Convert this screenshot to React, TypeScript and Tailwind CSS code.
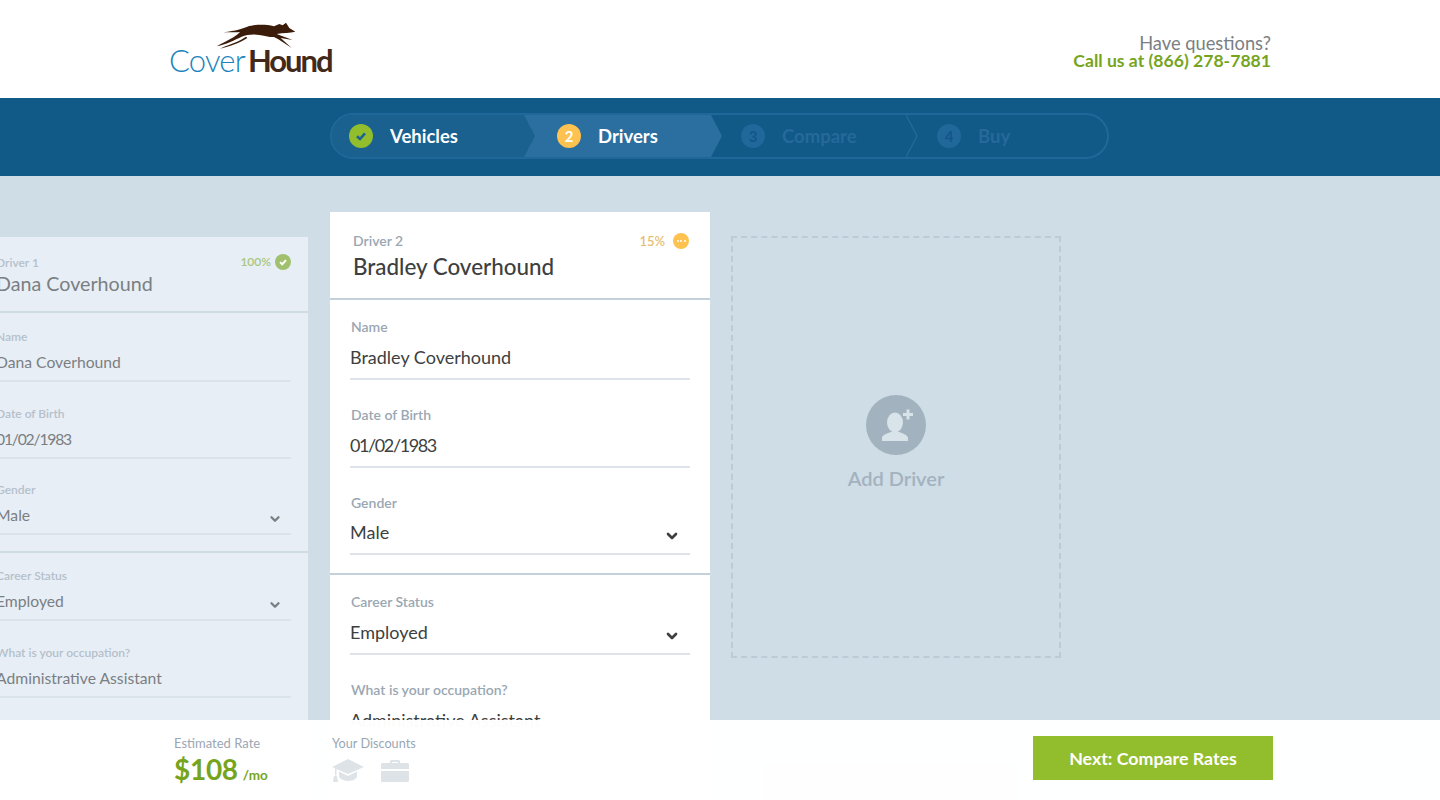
import { ChevronDown } from "lucide-react";

const font = "font-['Lato','Noto_Sans',sans-serif]";

const steps = [
  { n: "2", label: "Drivers", width: "w-[187px]", pl: "pl-[33px]" },
  { n: "3", label: "Compare", width: "w-[195px]", pl: "pl-[30px]" },
  { n: "4", label: "Buy", width: "w-[201px]", pl: "pl-[31px]" },
];

function Check({ className }: { className?: string }) {
  return (
    <svg viewBox="0 0 16 16" className={className} fill="none" stroke="currentColor" strokeWidth="2.6">
      <path d="M4 8.2 7 11l5-5.6" />
    </svg>
  );
}

function Logo() {
  return (
    <div className="relative h-[52px] w-[162px]">
      <svg viewBox="0 0 270 102" className="absolute left-[41px] top-[-4px] h-[34px] w-[90px]" fill="#3b1c0a">
        <path d="M256 41 238 30 228 14 218 22 208 18 192 25C165 18 130 20 112 26 95 32 80 38 40 43 60 42 75 44 90 42 75 58 50 68 20 85 50 78 70 68 95 56 115 48 140 48 165 54 175 57 185 57 192 57L205 64 245 90 212 60 248 66 200 48C220 44 240 45 256 41Z" />
        <path d="M30 92C50 80 75 78 108 56L112 60C85 78 60 84 30 92Z" />
      </svg>
      <div className="absolute bottom-[-2px] left-0 flex items-baseline text-[31px] leading-[32px]">
        <span className="font-light tracking-[-0.8px] text-[#1b84bd]">Cover</span>
        <span className="ml-[3px] font-bold tracking-[-2px] text-[#43291a]">Hound</span>
      </div>
    </div>
  );
}

function Stepper() {
  return (
    <div className="flex h-[78px] items-start bg-[#115a87] pl-[330px] pt-[15px]">
      <div className="flex h-[46px] w-[779px] overflow-hidden rounded-full border-2 border-[#20689a] text-[18.5px] font-bold">
        <div className="relative z-10 flex w-[192px] items-center bg-[#1b618f] pl-[17px] text-white">
          <span className="flex h-6 w-6 items-center justify-center rounded-full bg-[#92bd2d] text-[#1c6392]">
            <Check className="h-4 w-4" />
          </span>
          <span className="ml-[17px] pt-[2px]">Vehicles</span>
        </div>
        {steps.map((s) => (
          <div key={s.n} className={`relative flex items-center ${s.width} ${s.pl} ${s.n === "2" ? "text-white" : "text-[#26699a]"}`}>
            {s.n === "2" && <div className="absolute inset-0 bg-[#2a6f9f]" />}
            {s.n === "2" && (
              <svg viewBox="0 0 11 42" preserveAspectRatio="none" className="absolute left-0 top-0 h-full w-[11px]">
                <path d="M0 0 11 21 0 42Z" fill="#1b618f" />
              </svg>
            )}
            {s.n === "2" && (
              <svg viewBox="0 0 11 42" preserveAspectRatio="none" className="absolute -right-[11px] top-0 z-10 h-full w-[11px]">
                <path d="M0 0 11 21 0 42Z" fill="#2a6f9f" />
              </svg>
            )}
            {s.n === "3" && (
              <svg viewBox="0 0 12 42" preserveAspectRatio="none" className="absolute -right-[12px] top-0 z-10 h-full w-[12px]" fill="none" stroke="#20689a" strokeWidth="1.5">
                <path d="M0 0 11 21 0 42" />
              </svg>
            )}
            <span className={`relative flex h-6 w-6 items-center justify-center rounded-full text-[15px] ${s.n === "2" ? "bg-[#fdc24f] text-white" : "bg-[#20689a] text-[#14558a]"}`}>
              {s.n}
            </span>
            <span className="relative ml-[17px] pt-[2px]">{s.label}</span>
          </div>
        ))}
      </div>
    </div>
  );
}

function DimField({ label, value, select, date }: { label: string; value: string; select?: boolean; date?: boolean }) {
  return (
    <div className="h-[76.5px] pt-[16px]">
      <div className="text-[12px] leading-[16px] font-semibold text-[#b4c0cb]">{label}</div>
      <div className="mt-[4px] flex h-[33px] items-center justify-between border-b-2 border-[#dae2ea] pb-[3px] text-[15.7px] text-[#7a7f83]">
        <span className={date ? "tracking-[-1.2px]" : ""}>{value}</span>
        {select && <ChevronDown size={14} strokeWidth={4} className="mr-[9px] translate-y-[3px]" />}
      </div>
    </div>
  );
}

function Field({ label, value, select, short, date }: { label: string; value: string; select?: boolean; short?: boolean; date?: boolean }) {
  return (
    <div className="h-[88px] pt-[18px]">
      <div className="pl-px text-[14px] leading-[18px] font-semibold text-[#9aa7b3]">{label}</div>
      <div className={`mt-[10px] flex items-center justify-between border-b-2 border-[#dde3e8] pb-[10px] text-[18px] text-[#3d3f41] ${short ? "h-[32.5px]" : "h-[34px]"}`}>
        <span className={date ? "tracking-[-1.4px]" : ""}>{value}</span>
        {select && <ChevronDown size={16} strokeWidth={4} className="mr-[10px] translate-y-[4px]" />}
      </div>
    </div>
  );
}

function DriverOne() {
  return (
    <div className="ml-[-34px] mt-[25px] h-[600px] w-[342px] shrink-0 bg-[#e8eef5]">
      <div className="relative h-[76px] border-b-2 border-[#cfdbe3] pl-[30px]">
        <div className="pt-[18px] text-[12px] leading-[16px] font-semibold text-[#b4c0cb]">Driver 1</div>
        <div className="text-[19.7px] leading-[26px] text-[#7a7f83]">Dana Coverhound</div>
        <div className="absolute right-[17px] top-[16px] flex items-center text-[12px] font-semibold text-[#a8c77f]">
          100%
          <span className="ml-[4px] flex h-4 w-4 items-center justify-center rounded-full bg-[#a1c06d] text-white">
            <Check className="h-3 w-3" />
          </span>
        </div>
      </div>
      <div className="h-[240px] border-b-2 border-[#cfdbe3] pl-[30px] pr-[17px]">
        <DimField label="Name" value="Dana Coverhound" />
        <DimField date label="Date of Birth" value="01/02/1983" />
        <DimField select label="Gender" value="Male" />
      </div>
      <div className="mt-[-1px] pl-[30px] pr-[17px]">
        <DimField select label="Career Status" value="Employed" />
        <DimField label="What is your occupation?" value="Administrative Assistant" />
      </div>
    </div>
  );
}

function DriverTwo() {
  return (
    <div className="ml-[22px] h-[600px] w-[380px] shrink-0 bg-white">
      <div className="relative h-[88px] border-b-2 border-[#c4d1db] pl-[23px]">
        <div className="pt-[20px] text-[14px] leading-[18px] font-semibold text-[#9aa7b3]">Driver 2</div>
        <div className="mt-[2px] text-[22.4px] leading-[30px] font-medium text-[#3d3f41]">Bradley Coverhound</div>
        <div className="absolute right-[21px] top-[21px] flex items-center text-[13px] leading-[16px] font-semibold text-[#e6be72]">
          15%
          <span className="ml-[8px] flex h-4 w-4 items-center justify-center gap-[1.5px] rounded-full bg-[#fdc24f]">
            <i className="h-[2px] w-[2px] rounded-full bg-white" />
            <i className="h-[2px] w-[2px] rounded-full bg-white" />
            <i className="h-[2px] w-[2px] rounded-full bg-white" />
          </span>
        </div>
      </div>
      <div className="h-[275px] border-b-2 border-[#c4d1db] px-[20px]">
        <Field label="Name" value="Bradley Coverhound" />
        <Field date label="Date of Birth" value="01/02/1983" />
        <Field select short label="Gender" value="Male" />
      </div>
      <div className="px-[20px]">
        <Field select label="Career Status" value="Employed" />
        <Field label="What is your occupation?" value="Administrative Assistant" />
      </div>
    </div>
  );
}

function AddDriver() {
  return (
    <div className="ml-[21px] mt-[24px] flex h-[422px] w-[330px] shrink-0 flex-col items-center border-2 border-dashed border-[#bccbd6] pt-[157px]">
      <div className="flex h-[60px] w-[60px] items-center justify-center rounded-full bg-[#a3b2bf]">
        <svg viewBox="0 0 60 60" className="h-[60px] w-[60px]" fill="#d8e3ea">
          <ellipse cx="29" cy="27.5" rx="8" ry="10" />
          <path d="M16 46v-3c0-3 5-4.500 9-6h8c4 1.500 9 3 9 6v3Z" />
          <path d="M40.500 14.500h3v3.500h3.500v3h-3.500v3.500h-3v-3.500H37v-3h3.500Z" />
        </svg>
      </div>
      <div className="mt-[10px] text-[20px] leading-[26px] font-semibold text-[#a3b2bf]">Add Driver</div>
    </div>
  );
}

function Footer() {
  return (
    <div className="absolute inset-x-0 bottom-0 flex h-[80px] bg-white/[.98]">
      <div className="ml-[174px] w-[158px] pt-[15px]">
        <div className="text-[13px] leading-[16px] text-[#9aa7b3]">Estimated Rate</div>
        <div className="flex items-baseline font-bold text-[#76a51d]">
          <span className="text-[28px] leading-[36px] tracking-[-0.3px]">$108</span>
          <span className="ml-[5px] text-[13.5px]">/mo</span>
        </div>
      </div>
      <div className="pt-[15px]">
        <div className="text-[12.7px] leading-[16px] text-[#9aa7b3]">Your Discounts</div>
        <div className="mt-[8px] flex items-center gap-[17px]">
          <svg viewBox="0 0 32 24" className="h-[24px] w-[32px]" fill="#dee3e8">
            <path d="M16 0 32 8 16 15 4.500 10v6.500H3V9.300L0 8Z" />
            <path d="M7 12.500 16 17l9-4.500V18c-2 3-5.500 4-9 4-3 0-5.500-1-7.500-2.500L7 18Z" />
            <path d="M2 17h3l1 6H1Z" />
          </svg>
          <svg viewBox="0 0 28 22" className="h-[22px] w-[28px]" fill="#dee3e8">
            <path d="M9 3V1.500C9 .700 9.700 0 10.500 0h7c.8 0 1.500.700 1.500 1.500V3h7.500c.8 0 1.500.700 1.500 1.500V9H0V4.500C0 3.700.700 3 1.500 3ZM11 3h6V2h-6Z" />
            <path d="M0 11h28v9.500c0 .8-.7 1.500-1.500 1.500h-25C.7 22 0 21.300 0 20.500Z" />
          </svg>
        </div>
      </div>
      <div className="ml-auto mr-[167px] mt-[16px] flex h-[44px] w-[240px] items-center justify-center bg-[#92bd2d] text-[17.8px] font-bold text-white">
        Next: Compare Rates
      </div>
    </div>
  );
}

export default function App() {
  return (
    <div className={`relative h-[800px] w-[1440px] overflow-hidden bg-[#cfdde6] ${font}`}>
      <header className="flex h-[98px] items-start justify-between bg-white pl-[169px] pr-[169px]">
        <div className="pt-[22px]">
          <Logo />
        </div>
        <div className="pt-[34px] text-right leading-[18px]">
          <div className="text-[18.3px] text-[#7a7f83]">Have questions?</div>
          <div className="text-[17.6px] font-bold text-[#76a51d]">Call us at (866) 278-7881</div>
        </div>
      </header>
      <Stepper />
      <main className="flex items-start pt-[36px]">
        <DriverOne />
        <DriverTwo />
        <AddDriver />
      </main>
      <Footer />
    </div>
  );
}
